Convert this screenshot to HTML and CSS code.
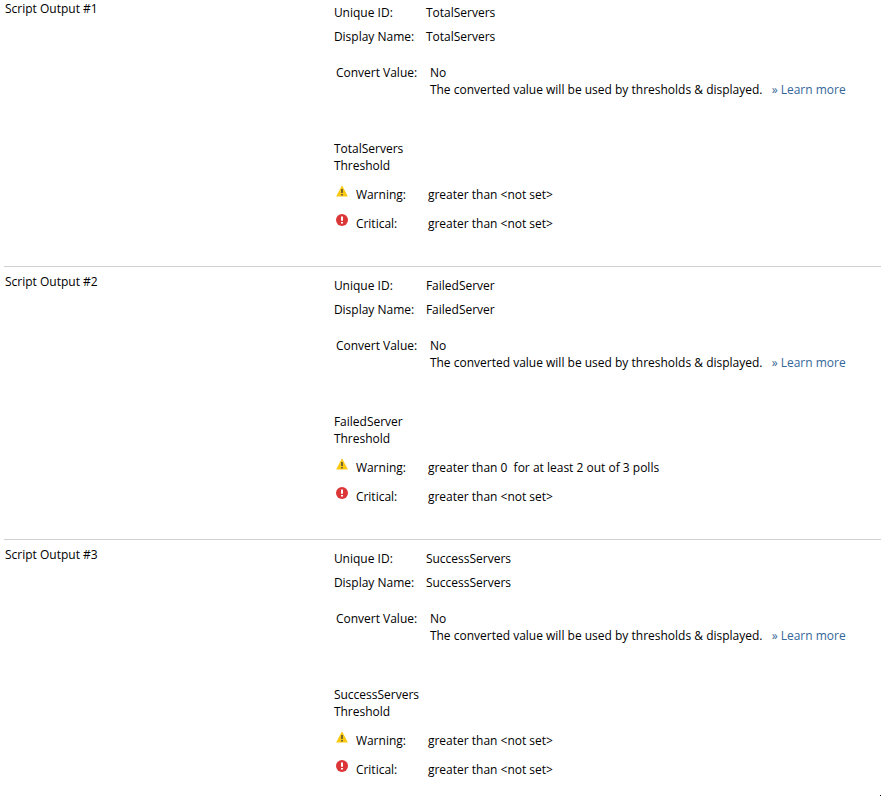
FILE: index.html
```html
<!DOCTYPE html>
<html lang="en">
<head>
<meta charset="utf-8">
<title>Script Outputs</title>
<link rel="stylesheet" href="styles.css">
</head>
<body>
<svg class="symbols" aria-hidden="true">
  <symbol id="warning" viewBox="0 0 12 12">
    <path d="M6 0.2 11.9 11.6H0.1z" fill="#fbc913"/>
    <path d="M5 4h2v4H5zM5 9h2v1.6H5z" fill="#796a2e"/>
  </symbol>
  <symbol id="critical" viewBox="0 0 12 12">
    <circle cx="6" cy="6" r="6" fill="#dc3738"/>
    <path d="M5 2.5h2v4.3H5zM5 8h2v1.6H5z" fill="#fff"/>
  </symbol>
</svg>
<main class="outputs">
  <section class="output">
    <h2 class="output-title">Script Output #1</h2>
    <div class="details">
      <dl class="fields">
        <dt>Unique ID:</dt><dd>TotalServers</dd>
        <dt>Display Name:</dt><dd>TotalServers</dd>
      </dl>
      <dl class="convert">
        <dt>Convert Value:</dt>
        <dd>No<div class="hint">The converted value will be used by thresholds &amp; displayed. <a class="learn" href="#">» Learn more</a></div></dd>
      </dl>
      <h3 class="threshold-title">TotalServers<br>Threshold</h3>
      <dl class="thresholds">
        <dt><svg class="icon"><use href="#warning"/></svg>Warning:</dt><dd>greater than &lt;not set&gt;</dd>
        <dt><svg class="icon"><use href="#critical"/></svg>Critical:</dt><dd>greater than &lt;not set&gt;</dd>
      </dl>
    </div>
  </section>
  <section class="output">
    <h2 class="output-title">Script Output #2</h2>
    <div class="details">
      <dl class="fields">
        <dt>Unique ID:</dt><dd>FailedServer</dd>
        <dt>Display Name:</dt><dd>FailedServer</dd>
      </dl>
      <dl class="convert">
        <dt>Convert Value:</dt>
        <dd>No<div class="hint">The converted value will be used by thresholds &amp; displayed. <a class="learn" href="#">» Learn more</a></div></dd>
      </dl>
      <h3 class="threshold-title">FailedServer<br>Threshold</h3>
      <dl class="thresholds">
        <dt><svg class="icon"><use href="#warning"/></svg>Warning:</dt><dd>greater than 0&nbsp; for at least 2 out of 3 polls</dd>
        <dt><svg class="icon"><use href="#critical"/></svg>Critical:</dt><dd>greater than &lt;not set&gt;</dd>
      </dl>
    </div>
  </section>
  <section class="output">
    <h2 class="output-title">Script Output #3</h2>
    <div class="details">
      <dl class="fields">
        <dt>Unique ID:</dt><dd>SuccessServers</dd>
        <dt>Display Name:</dt><dd>SuccessServers</dd>
      </dl>
      <dl class="convert">
        <dt>Convert Value:</dt>
        <dd>No<div class="hint">The converted value will be used by thresholds &amp; displayed. <a class="learn" href="#">» Learn more</a></div></dd>
      </dl>
      <h3 class="threshold-title">SuccessServers<br>Threshold</h3>
      <dl class="thresholds">
        <dt><svg class="icon"><use href="#warning"/></svg>Warning:</dt><dd>greater than &lt;not set&gt;</dd>
        <dt><svg class="icon"><use href="#critical"/></svg>Critical:</dt><dd>greater than &lt;not set&gt;</dd>
      </dl>
    </div>
  </section>
</main>
<div class="end-mark"></div>
</body>
</html>
```
FILE: styles.css
```css
* {
  box-sizing: border-box;
}

body {
  display: flex;
  flex-direction: column;
  min-height: 100vh;
  margin: 0;
  background: #fff;
  color: #000;
  font: 12px/17px "Open Sans", sans-serif;
}

h2,
h3,
dl,
dd {
  margin: 0;
  font: inherit;
}

.symbols {
  display: none;
}

.outputs {
  padding-left: 4px;
}

.output {
  display: grid;
  grid-template-columns: 3fr 5fr;
  padding: 6px 0 28px;
  border-bottom: 1px solid #d0d0d0;
}

.output:first-child {
  padding-top: 0;
}

.output:last-child {
  padding-bottom: 0;
  border-bottom: 0;
}

.output-title {
  padding-left: 1px;
}

.details {
  padding-top: 1px;
}

.fields,
.convert,
.thresholds {
  display: grid;
  grid-template-columns: 92px 1fr;
  white-space: nowrap;
}

.fields,
.threshold-title,
.thresholds {
  margin-left: 1px;
}

.fields {
  line-height: 24px;
}

.convert {
  grid-template-columns: 94px 1fr;
  margin: 15px 0 42px 3px;
}

.learn {
  margin-left: 6px;
  color: #336699;
  text-decoration: none;
}

.learn:hover {
  text-decoration: underline;
}

.thresholds {
  grid-template-columns: 94px 1fr;
  padding-top: 6px;
  line-height: 29px;
}

.thresholds dt {
  display: flex;
  align-items: flex-start;
  gap: 8px;
}

.icon {
  width: 12px;
  height: 12px;
  margin: 5px 0 0 2px;
}

.end-mark {
  width: 1px;
  height: 1px;
  margin: auto 0 0 auto;
  background: #000;
}
```
